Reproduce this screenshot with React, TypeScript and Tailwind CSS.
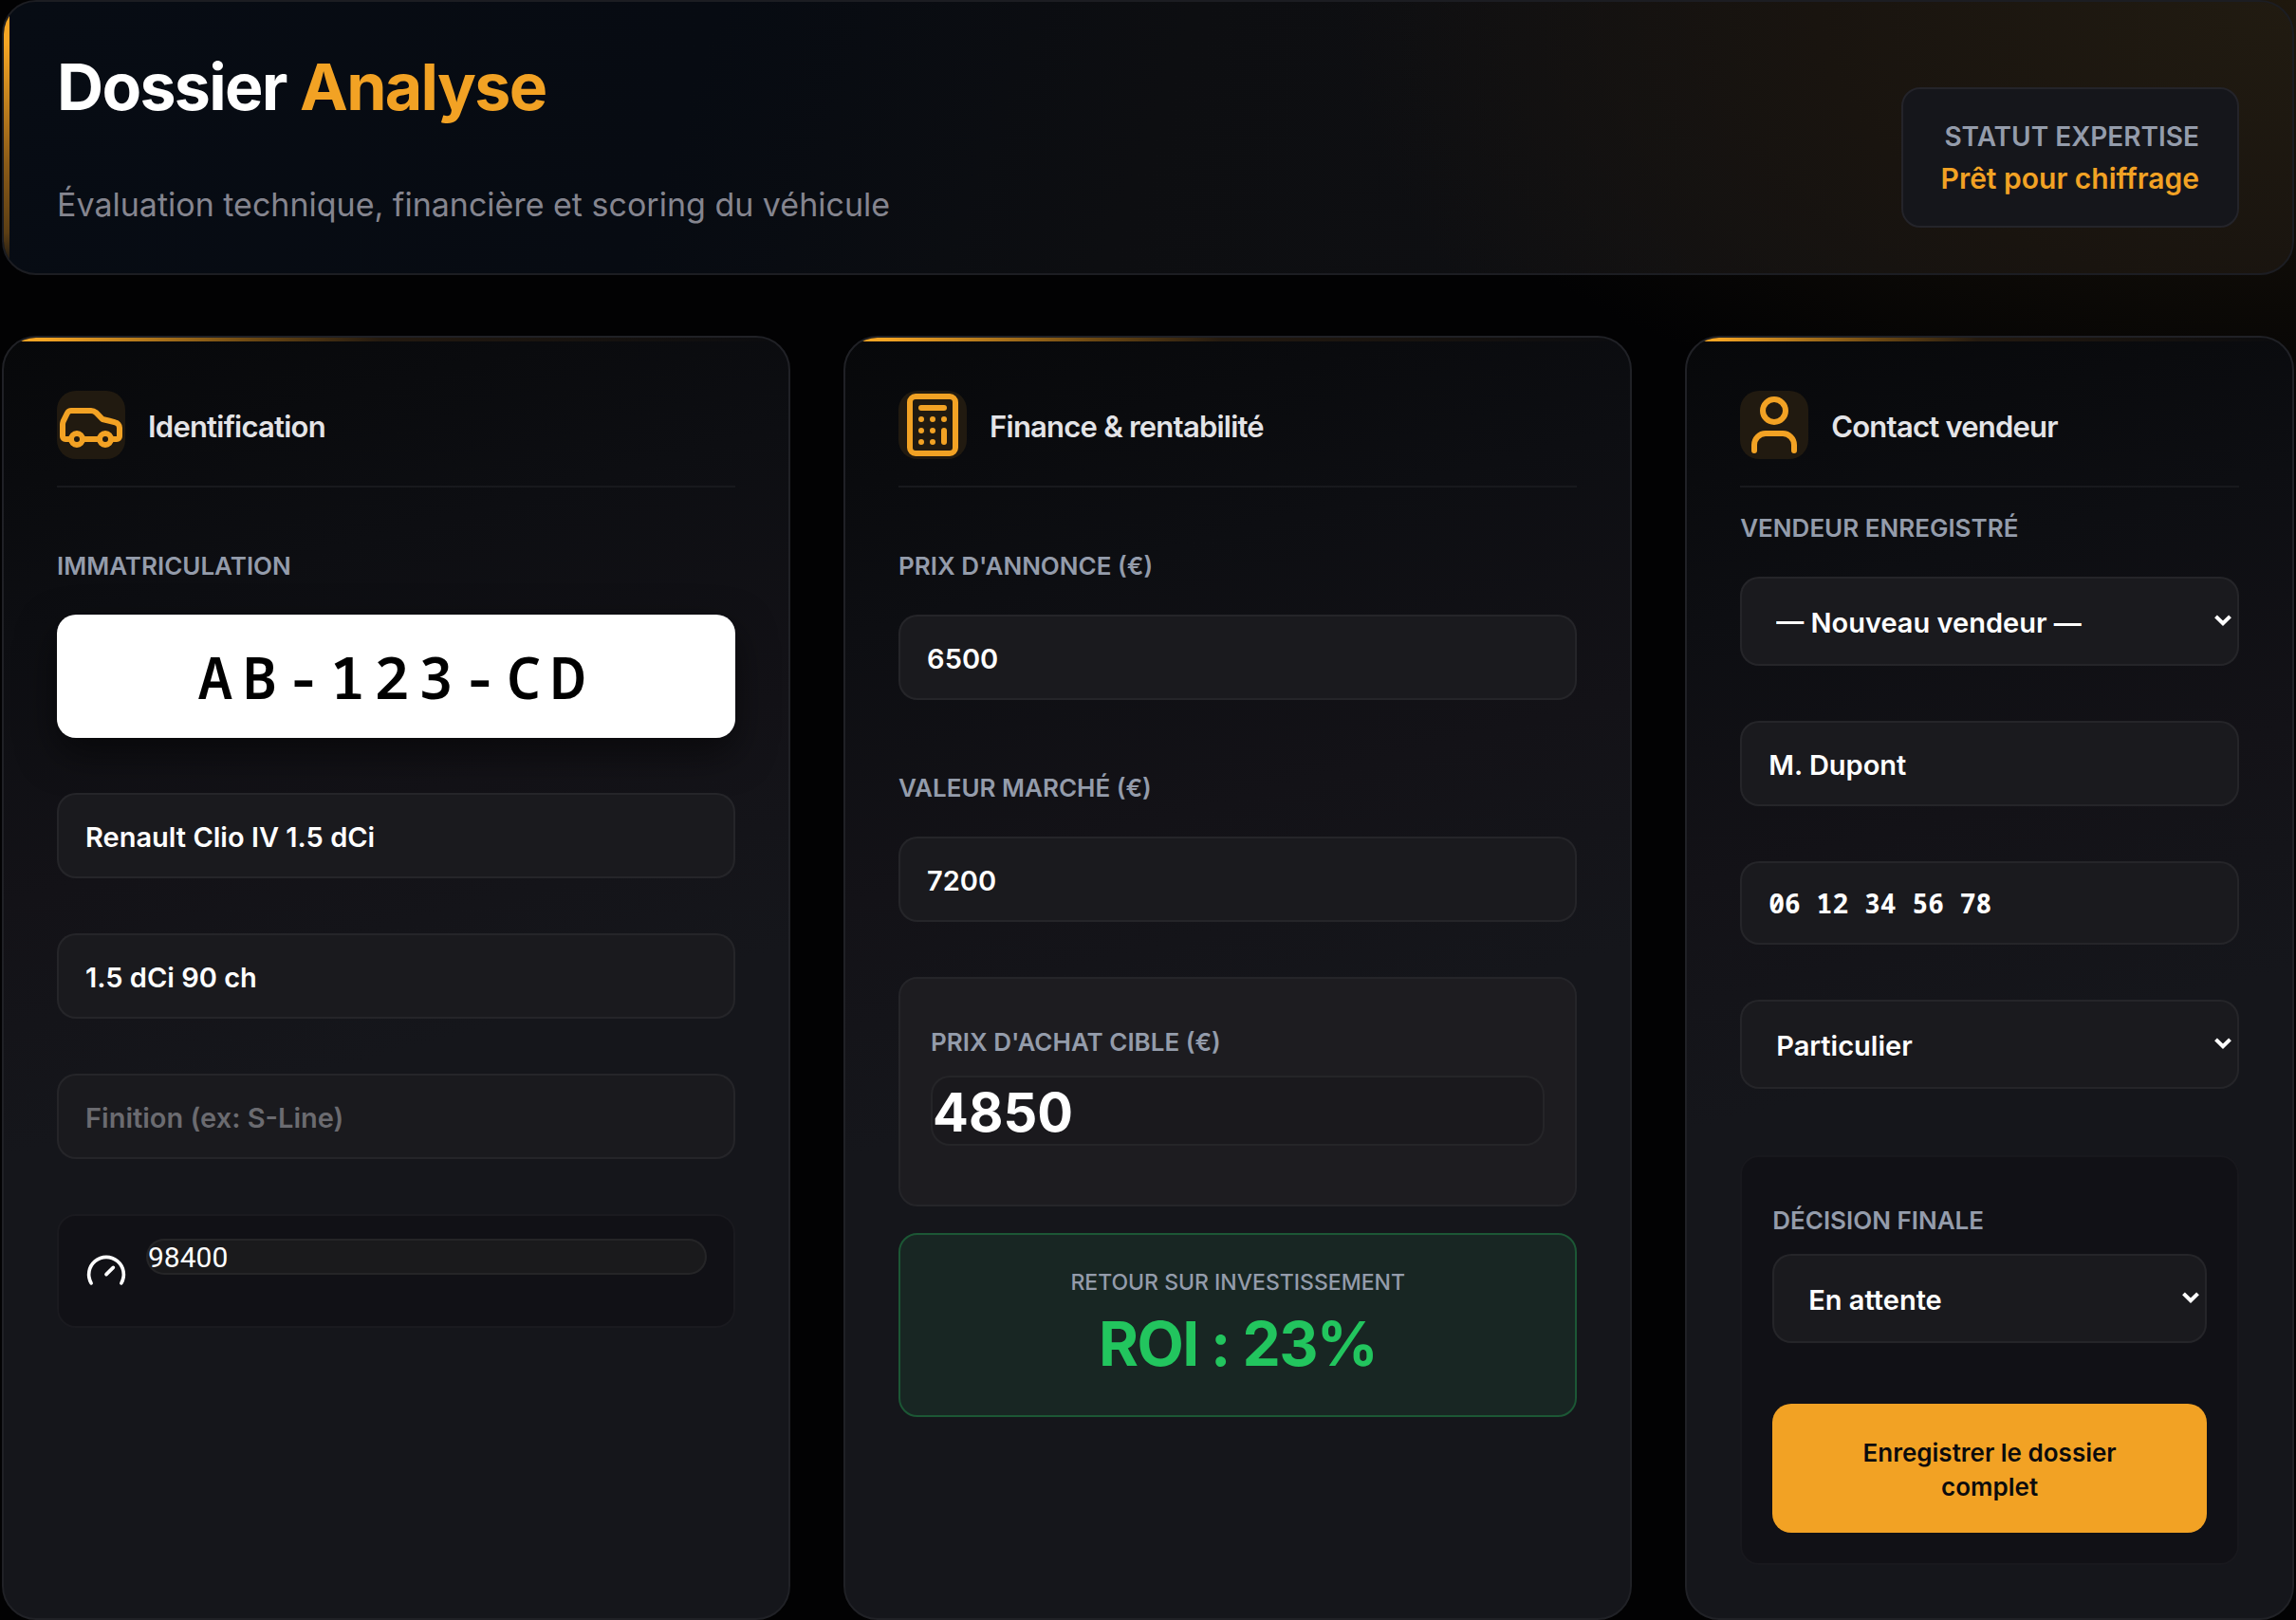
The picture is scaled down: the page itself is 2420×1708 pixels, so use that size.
import React from 'react';
import { Calculator, Car, Gauge, User } from 'lucide-react';

const fieldClass =
  'block w-full rounded-[20px] border-2 border-white/5 bg-[#1a1a1e] px-7 pt-0.5 text-[29px] font-semibold text-white outline-none placeholder:text-[#6b6b70]';

const labelClass = 'block pt-4 text-[26px] leading-[38px] font-semibold uppercase text-[#949cab]';

interface CardProps {
  title: string;
  icon: React.ReactNode;
  children: React.ReactNode;
}

const Card: React.FC<CardProps> = ({ title, icon, children }) => (
  <section className="relative overflow-hidden rounded-[36px] border-2 border-[#202126] bg-[linear-gradient(165deg,#07080a_0%,#0d0e12_20%,#131217_38%,#15161b_55%,#15161b_100%)] p-14">
    {/* Accent line */}
    <div className="absolute inset-x-0 top-0 h-1 bg-[linear-gradient(90deg,#f5a524_0%,#f5a524_5%,#6b4712_32%,#241a10_48%,transparent_100%)]"></div>
    <div className="flex items-center gap-6 border-b-2 border-[#18191d] pb-7">
      <div className="flex size-18 items-center justify-center rounded-[20px] bg-[#211a10] text-[#f2a224]">{icon}</div>
      <h2 className="pt-1 text-[31px] leading-10 font-semibold tracking-tight text-[#e4e4e7]">{title}</h2>
    </div>
    {children}
  </section>
);

interface SelectFieldProps {
  id: string;
  value: string;
  label?: string;
  options: string[];
}

const SelectField: React.FC<SelectFieldProps> = ({ id, value, label, options }) => (
  <div className="relative">
    <select
      id={id}
      aria-label={label}
      defaultValue={value}
      className="block h-[94px] w-full appearance-none rounded-[20px] border-2 border-white/5 bg-[#1a1a1e] px-9 pt-1 text-[29px] font-semibold text-white outline-none"
    >
      {options.map(o => (
        <option key={o}>{o}</option>
      ))}
    </select>
    <svg viewBox="0 0 18 12" className="pointer-events-none absolute top-10 right-2 h-3 w-[18px]" fill="none" stroke="white" strokeWidth="4">
      <path d="M1.5 1.8 9 9.2l7.5-7.4" />
    </svg>
  </div>
);

export default function App() {
  return (
    <main className="min-h-screen bg-[#020203] bg-[radial-gradient(ellipse_1000px_480px_at_100%_0%,#1f180d_0%,transparent_100%)] px-0.5 font-['Inter','Noto_Sans',sans-serif] text-white">

      {/* Header */}
      <header className="relative flex items-end justify-between overflow-hidden rounded-[36px] border-2 border-[#1c1d22] bg-[radial-gradient(ellipse_1000px_620px_at_100%_0%,#211b11_0%,#19140f_50%,transparent_100%),linear-gradient(110deg,#070c14_0%,#070b12_30%,#0d0e11_50%,#111114_100%)] px-14 pt-[50px] pb-12">
        <div className="absolute inset-y-0 left-0 w-1.5 bg-[linear-gradient(180deg,#f5a524_0%,#f5a524_15%,#8a5a17_60%,#5c3e14_85%,transparent_100%)]"></div>
        <div>
          <h1 className="text-[68px] leading-[78px] font-bold tracking-tight text-white">
            Dossier <span className="text-[#f2a224]">Analyse</span>
          </h1>
          <p className="mt-[62px] text-[34px] leading-[48px] text-[#85858f]">
            Évaluation technique, financière et scoring du véhicule
          </p>
        </div>
        <div className="rounded-[20px] border-2 border-[#24242a] bg-[#15161b] px-10 py-7 text-right leading-[44px]">
          <p className="text-[28px] font-semibold text-[#949cab]">STATUT EXPERTISE</p>
          <p className="text-[30px] font-semibold text-[#f2a224]">Prêt pour chiffrage</p>
        </div>
      </header>

      <div className="mt-16 grid grid-cols-[1.295fr_1.295fr_1fr] gap-14">

        {/* Identification */}
        <Card title="Identification" icon={<Car className="size-18" />}>
          <div className="mt-12">
            <label htmlFor="plate" className={`${labelClass} pb-8`}>Immatriculation</label>
            <input
              id="plate"
              defaultValue="AB-123-CD"
              className="block h-[130px] w-full rounded-[20px] bg-white text-center font-['Noto_Sans_Mono','DejaVu_Sans_Mono',monospace] text-[62px] font-semibold tracking-[0.15em] text-black shadow-[0_16px_40px_rgba(0,0,0,0.5)] outline-none"
            />
          </div>
          <div className="mt-[58px] flex flex-col gap-[58px]">
            <input aria-label="Modèle" defaultValue="Renault Clio IV 1.5 dCi" className={`${fieldClass} h-[90px]`} />
            <input aria-label="Motorisation" defaultValue="1.5 dCi 90 ch" className={`${fieldClass} h-[90px]`} />
            <input aria-label="Finition" placeholder="Finition (ex: S-Line)" className={`${fieldClass} h-[90px]`} />
            <div className="flex items-center gap-5 rounded-[20px] border-2 border-[#1a1a1f] bg-[#111116] px-7 pt-6 pb-6">
              <Gauge className="size-11 shrink-0 text-white" />
              <input
                aria-label="Kilométrage"
                defaultValue="98400"
                className="mb-[30px] block h-[38px] w-full rounded-[20px] border-2 border-white/5 bg-[#1a1a1c] font-['Roboto',sans-serif] text-[30px] text-white outline-none"
              />
            </div>
          </div>
        </Card>

        {/* Finance */}
        <Card title="Finance & rentabilité" icon={<Calculator className="size-18" />}>
          <div className="mt-12">
            <label htmlFor="ask" className={`${labelClass} pb-8`}>Prix d'annonce (€)</label>
            <input id="ask" defaultValue="6500" className={`${fieldClass} h-[90px]`} />
          </div>
          <div className="mt-[58px]">
            <label htmlFor="market" className={`${labelClass} pb-8`}>Valeur marché (€)</label>
            <input id="market" defaultValue="7200" className={`${fieldClass} h-[90px]`} />
          </div>
          <div className="mt-[58px] rounded-[20px] border-2 border-[#252529] bg-[#1d1c20] p-8">
            <label htmlFor="target" className={`${labelClass} pb-4`}>Prix d'achat cible (€)</label>
            <input
              id="target"
              defaultValue="4850"
              className="mb-[30px] block h-[74px] w-full rounded-[20px] border-2 border-white/5 bg-[#1a191d] pt-1 text-[56px] font-bold text-white outline-none"
            />
          </div>
          <div className="mt-7 flex flex-col items-center rounded-[20px] border-2 border-[#1c5735] bg-[#182623] pt-8 pb-9">
            <p className="text-[23px] leading-9 font-medium text-[#949cab]">RETOUR SUR INVESTISSEMENT</p>
            <p className="mt-2 text-[64px] leading-[78px] font-bold tracking-tight text-[#22c55e]">ROI : 23%</p>
          </div>
        </Card>

        {/* Contact */}
        <Card title="Contact vendeur" icon={<User className="size-18" />}>
          <div className="mt-2">
            <label htmlFor="seller" className={`${labelClass} pb-8`}>Vendeur enregistré</label>
            <SelectField id="seller" value="— Nouveau vendeur —" options={['— Nouveau vendeur —', 'M. Dupont']} />
          </div>
          <div className="mt-[58px] flex flex-col gap-[58px]">
            <input aria-label="Nom du vendeur" defaultValue="M. Dupont" className={`${fieldClass} h-[90px]`} />
            <input
              aria-label="Téléphone"
              type="tel"
              defaultValue="06 12 34 56 78"
              className="block h-[88px] w-full rounded-[20px] border-2 border-white/5 bg-[#1a1a1e] px-7 font-['Noto_Sans_Mono','DejaVu_Sans_Mono',monospace] text-[28px] font-bold text-white outline-none"
            />
            <SelectField id="kind" label="Type de vendeur" value="Particulier" options={['Particulier', 'Professionnel']} />
          </div>
          <div className="mt-[70px] rounded-[20px] border-2 border-[#18181d] bg-[#111116] p-8">
            <label htmlFor="decision" className={`${labelClass} pb-4`}>Décision finale</label>
            <SelectField id="decision" value="En attente" options={['En attente', 'Acheter', 'Refuser']} />
            <button
              type="button"
              className="mt-16 block w-full rounded-[20px] bg-[#f2a224] px-16 pt-[34px] pb-[30px] text-[26px] leading-9 font-semibold text-[#0b0b0d]"
            >
              Enregistrer le dossier complet
            </button>
          </div>
        </Card>
      </div>
    </main>
  );
}
